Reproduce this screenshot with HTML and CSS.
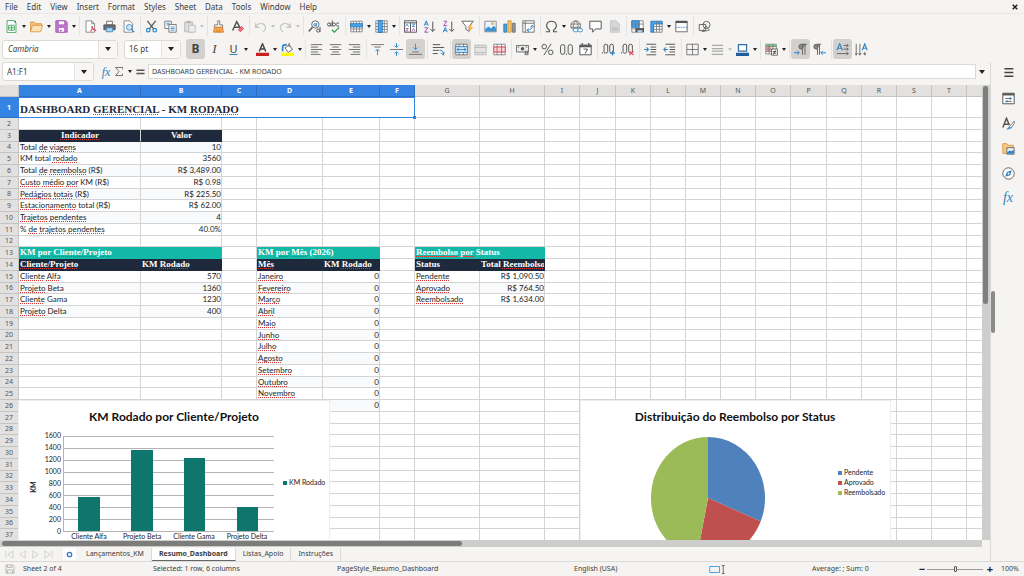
FILE: index.html
```html
<!DOCTYPE html>
<html lang="en">
<head>
<meta charset="utf-8">
<title>Resumo_Dashboard</title>
<link rel="stylesheet" href="styles.css">
</head>
<body>
<header>
<nav class="menubar" aria-label="Main menu">
  <button>File</button><button>Edit</button><button>View</button><button>Insert</button><button>Format</button><button>Styles</button><button>Sheet</button><button>Data</button><button>Tools</button><button>Window</button><button>Help</button>
  <button class="close" aria-label="Close document"><svg viewBox="0 0 8 8"><path d="M1 1l6 6M7 1l-6 6" stroke="#222" stroke-width="2"/></svg></button>
</nav>

<div class="toolbar" role="toolbar" aria-label="Standard">
  <button class="tb" aria-label="New"><svg viewBox="0 0 16 16"><path d="M2.500.5h8l3 3v12h-11z" fill="#fff" stroke="#2e9e4f"/><path d="M4.500 6.500h7v6h-7zM4.500 9.500h7M8 6.500v6" stroke="#2e9e4f"/><path d="M10 1h3.500v3" fill="#2e9e4f"/></svg></button><button class="dd" aria-label="New options"></button>
  <button class="tb" aria-label="Open"><svg viewBox="0 0 16 16"><path d="M.5 14V2.500h5l1.500 2h7V7" fill="#f5c580" stroke="#d9903a"/><path d="M.5 14.500L3 6.500h12.500l-2.500 8z" fill="#fbe3b8" stroke="#d9903a"/></svg></button><button class="dd" aria-label="Open options"></button>
  <button class="tb" aria-label="Save"><svg viewBox="0 0 16 16"><path d="M1 1h12l2 2v12H1z" fill="#c77dd4" stroke="#9b45ad"/><path d="M4 1h8v5H4zM4 9h8v6H4z" fill="#fff" stroke="#9b45ad"/><path d="M6 12h2v2H6z" fill="#9b45ad"/></svg></button><button class="dd" aria-label="Save options"></button>
  <i class="sep"></i>
  <button class="tb" aria-label="Export as PDF"><svg viewBox="0 0 16 16"><path d="M2.500 1h7l3.500 3.500V15h-10.500z" fill="#fff" stroke="#777"/><path d="M9.500 1v3.500H13" stroke="#777"/><path d="M8 14c2-2 3-5 2-6s0 4 5 5" stroke="#e04f5f" stroke-width="1.500"/></svg></button>
  <button class="tb" aria-label="Print"><svg viewBox="0 0 16 16"><path d="M4.500 1.500h7V6h-7z" fill="#fff" stroke="#555"/><path d="M1 6h14v6H1z" fill="#6b6b6b" stroke="#555"/><path d="M4 9.500h8v5H4z" fill="#a9d3f3" stroke="#3b80b8"/></svg></button>
  <button class="tb" aria-label="Print preview"><svg viewBox="0 0 16 16"><path d="M2.500 1h7l3.500 3.500V15h-10.500z" fill="#fff" stroke="#777"/><circle cx="9" cy="9" r="3.500" fill="#cfe8fa" stroke="#2f83c5"/><path d="M11.500 11.500L15 15" stroke="#2f83c5" stroke-width="1.500"/></svg></button>
  <i class="sep"></i>
  <button class="tb" aria-label="Cut"><svg viewBox="0 0 16 16"><path d="M3 1l7.500 10M13 1L5.500 11" stroke="#555" stroke-width="1.500"/><circle cx="4" cy="12.500" r="2.200" stroke="#2f83c5" stroke-width="1.500"/><circle cx="12" cy="12.500" r="2.200" stroke="#2f83c5" stroke-width="1.500"/></svg></button>
  <button class="tb" aria-label="Copy"><svg viewBox="0 0 16 16"><path d="M1 1.500h8v9H1z" fill="#fff" stroke="#666"/><path d="M3 4h4M3 6h3" stroke="#2f83c5"/><path d="M6 5.500h9V15H6z" fill="#fff" stroke="#666"/><path d="M8 8.500h5M8 10.500h5M8 12.500h5" stroke="#2f83c5"/></svg></button>
  <button class="tb" aria-label="Paste" disabled><svg viewBox="0 0 16 16"><path d="M2 2.500h10v12H2z" fill="#ddd" stroke="#b5b5b5"/><path d="M4.500 1h5v3h-5z" fill="#b5b5b5"/><path d="M7 6.500h8V15H7z" fill="#eee" stroke="#b5b5b5"/></svg></button><button class="dd off" aria-label="Paste options" disabled></button>
  <i class="sep"></i>
  <button class="tb" aria-label="Clone formatting"><svg viewBox="0 0 16 16"><path d="M7 1h2.500v5H13v3H3V6h4z" fill="#fff" stroke="#666"/><path d="M3 9h10l1 6H2z" fill="#f5a94f" stroke="#cf7a22"/><path d="M6 12v3M9 12v3" stroke="#cf7a22"/></svg></button>
  <button class="tb" aria-label="Clear formatting"><svg viewBox="0 0 16 16"><path d="M2 13L7 2l4.500 8M4 9h6" stroke="#555" stroke-width="1.800"/><path d="M9 12l4-4 2.500 2.500-4 4z" fill="#f0707c" stroke="#d8404f"/></svg></button>
  <i class="sep"></i>
  <button class="tb" aria-label="Undo" disabled><svg viewBox="0 0 16 16"><path d="M2 4v5h5M2 9c3-6 10-6 12-1 1 3-1 5-3 7" stroke="#c2c2c2" stroke-width="1.400"/></svg></button><button class="dd off" aria-label="Undo list" disabled></button>
  <button class="tb" aria-label="Redo" disabled><svg viewBox="0 0 16 16"><path d="M14 4v5H9M14 9C11 3 4 3 2 8c-1 3 1 5 3 7" stroke="#c2c2c2" stroke-width="1.400"/></svg></button><button class="dd off" aria-label="Redo list" disabled></button>
  <i class="sep"></i>
  <button class="tb" aria-label="Find and replace"><svg viewBox="0 0 16 16"><circle cx="9" cy="5.500" r="4.500" fill="#fff" stroke="#666" stroke-width="1.200"/><circle cx="8.500" cy="6" r="1.500" stroke="#2f83c5" stroke-width="1.200"/><path d="M10.500 3.500v4.500" stroke="#2f83c5"/><path d="M5.500 9L1 14" stroke="#666" stroke-width="2"/><circle cx="12.500" cy="13" r="1.900" stroke="#555" stroke-width="1.200"/><path d="M14.800 8.500V15" stroke="#555" stroke-width="1.200"/></svg></button>
  <button class="tb" aria-label="Spelling"><svg viewBox="0 0 16 16"><g stroke="#555" stroke-width="1.200"><circle cx="2.500" cy="5.500" r="1.900"/><path d="M4.700 3.500V8M6.500.5V8M14.800 4.200a2 2 0 1 0 0 2.800"/><circle cx="8.500" cy="5.500" r="1.900"/></g><path d="M6 12l3 3 6-6" stroke="#2e9e4f" stroke-width="1.500"/></svg></button>
  <i class="sep"></i>
  <button class="tb" aria-label="Row"><svg viewBox="0 0 16 16"><path d="M1 1.500h14v13H1z" fill="#fff" stroke="#777"/><path d="M1 11h14M4.500 1.500v13M8 1.500v13M11.500 1.500v13" stroke="#777"/><path d="M.5 4.500h15v4H.5z" fill="#4aa3e8" stroke="#2274b5"/></svg></button><button class="dd" aria-label="Row options"></button>
  <button class="tb" aria-label="Column"><svg viewBox="0 0 16 16"><path d="M1 1h14v14H1z" fill="#fff" stroke="#777"/><path d="M1 4.500h14M1 8h14M1 11.500h14M11.500 1v14" stroke="#777"/><path d="M4 .5h5v15H4z" fill="#4aa3e8" stroke="#2274b5"/></svg></button><button class="dd" aria-label="Column options"></button>
  <i class="sep"></i>
  <button class="tb" aria-label="Sort"><svg viewBox="0 0 16 16"><path d="M.5 1h15v14H.5zM.5 3.500h15M8 3.500V15" fill="#fff" stroke="#555" stroke-width="1.200"/><path d="M2 8l1.500-3L5.500 8M10 5h3.500L10 8h3.500" stroke="#2f83c5"/><path d="M2 10.500h3.500L2 13.500h3.500M10 13.500l1.500-3 2 3" stroke="#a24fb5"/></svg></button>
  <button class="tb" aria-label="Sort ascending"><svg viewBox="0 0 16 16"><path d="M1.500 7l2.500-6 2.500 6M2.500 5h3" stroke="#2f83c5" stroke-width="1.200"/><path d="M2 9.500h4L2 15h4.500" stroke="#a24fb5" stroke-width="1.200"/><path d="M12 2v12M9 11l3 3 3-3" stroke="#555" stroke-width="1.200"/></svg></button>
  <button class="tb" aria-label="Sort descending"><svg viewBox="0 0 16 16"><path d="M2 1.500h4L2 7h4.500" stroke="#a24fb5" stroke-width="1.200"/><path d="M1.500 15L4 9l2.500 6M2.500 13h3" stroke="#2f83c5" stroke-width="1.200"/><path d="M12 2v12M9 11l3 3 3-3" stroke="#555" stroke-width="1.200"/></svg></button>
  <button class="tb" aria-label="AutoFilter"><svg viewBox="0 0 16 16"><path d="M1 1.500h14L10 8v6l-4-2.500V8z" fill="#fff" stroke="#666" stroke-width="1.200"/><path d="M12 5l-4 6h3l-2 5 6-7h-3l2-4z" fill="#f2b14c"/></svg></button>
  <i class="sep"></i>
  <button class="tb" aria-label="Insert image"><svg viewBox="0 0 16 16"><path d="M1 1.500h14v13H1z" fill="#e9f4fd" stroke="#777"/><path d="M1.500 14V11l4-3 3 2.500L12 7l3 3v4z" fill="#3f92d2"/><circle cx="10.500" cy="4.500" r="1.800" fill="#f2b14c"/></svg></button>
  <button class="tb" aria-label="Insert chart"><svg viewBox="0 0 16 16"><path d="M1 5h3.500v10H1z" fill="#4aa3e8" stroke="#2274b5"/><path d="M6 1h4v14H6z" fill="#f7c66e" stroke="#cf8a22"/><path d="M11.500 4H15v11h-3.500z" fill="#999" stroke="#666"/></svg></button>
  <button class="tb" aria-label="Insert pivot table"><svg viewBox="0 0 16 16"><path d="M1 1h14v14H1zM1 4h14M4 1v14" fill="#fff" stroke="#777" stroke-width="1.200"/><path d="M6.500 12.500c4 0 6-2 6-5M10.500 9l2-2.500 2 2M8.500 10.500l-2.500 2 2.500 2" stroke="#2f83c5" stroke-width="1.200"/></svg></button>
  <i class="sep"></i>
  <button class="tb" aria-label="Special character"><svg viewBox="0 0 16 16"><path d="M1 14.500h4.500v-2C-.5 8 2 1.500 8 1.500S16.500 8 10.500 12.500v2H15" stroke="#555" stroke-width="1.400"/></svg></button><button class="dd" aria-label="Special characters list"></button>
  <button class="tb" aria-label="Insert hyperlink"><svg viewBox="0 0 16 16"><circle cx="7" cy="7" r="6" stroke="#666"/><path d="M1 5h12M1 9h12M7 1c-4 4-4 8 0 12M7 1c4 4 4 8 0 12" stroke="#666"/><rect x="4" y="10.500" width="6" height="4" rx="2" fill="#fff" stroke="#2f83c5"/><rect x="9.500" y="10.500" width="6" height="4" rx="2" fill="#fff" stroke="#2f83c5"/></svg></button>
  <button class="tb" aria-label="Insert comment"><svg viewBox="0 0 16 16"><path d="M1 1.500h14v9.500H8l-3.500 4V11H1z" fill="#fff" stroke="#555" stroke-width="1.200"/></svg></button>
  <button class="tb" aria-label="Headers and footers" disabled><svg viewBox="0 0 16 16"><path d="M3 1h7l4 4v10H3z" fill="#d6d6d6" stroke="#c2c2c2"/><path d="M5 10h7M5 12h7" stroke="#b5b5b5"/></svg></button>
  <i class="sep"></i>
  <button class="tb" aria-label="Define print area"><svg viewBox="0 0 16 16"><path d="M1 1h14v14H1z" fill="#fff" stroke="#777"/><path d="M1 1h9v8H1z" fill="#4aa3e8" stroke="#2274b5"/><path d="M1 5h14M5.500 1v14M10 1v14M1 11h14" stroke="#777"/><path d="M6 10h10v5H6z" fill="#555"/><path d="M8 12.500h6v3H8z" fill="#a9d3f3"/></svg></button>
  <button class="tb" aria-label="Freeze rows and columns"><svg viewBox="0 0 16 16"><path d="M4 4h11v11H4z" fill="#fff" stroke="#777"/><path d="M1 4V1.500h14V5H4.500v10H1z" fill="#4aa3e8" stroke="#2274b5"/><path d="M4 8h11M4 11.500h11M8 2v13M11.500 2v13" stroke="#777"/></svg></button><button class="dd" aria-label="Freeze options"></button>
  <button class="tb" aria-label="Split window"><svg viewBox="0 0 16 16"><path d="M1 1.500h14v13H1z" fill="#fff" stroke="#555"/><path d="M1 2.500h14" stroke="#555" stroke-width="2.500"/><path d="M1 9h14" stroke="#2f83c5" stroke-dasharray="2 1"/></svg></button>
  <i class="sep"></i>
  <button class="tb" aria-label="Show draw functions"><svg viewBox="0 0 16 16"><path d="M1.500 5.500h8V13h-8z" stroke="#666" stroke-width="1.200"/><circle cx="10.500" cy="6" r="4.300" stroke="#666" stroke-width="1.200"/><path d="M5 14.500l5-7 4 5z" stroke="#666"/></svg></button>
</div>

<div class="toolbar formatting" role="toolbar" aria-label="Formatting">
  <div class="combo font-name"><input type="text" value="Cambria" aria-label="Font name"><button aria-label="Font list"></button></div>
  <div class="combo font-size"><input type="text" value="16 pt" aria-label="Font size"><button aria-label="Size list"></button></div>
  <button class="tb on" aria-label="Bold"><b class="glyph">B</b></button>
  <button class="tb" aria-label="Italic"><em class="glyph serif">I</em></button>
  <button class="tb" aria-label="Underline"><u class="glyph under">U</u></button><button class="dd" aria-label="Underline options"></button>
  <i class="sep blank"></i>
  <button class="tb" aria-label="Font color"><svg viewBox="0 0 16 16"><path d="M4 10.500L8 1l4 9.500M5.500 7.500h5" stroke="#444" stroke-width="1.800"/><path d="M0 12h16v4H0z" fill="#c9211e"/></svg></button><button class="dd" aria-label="Font color list"></button>
  <button class="tb" aria-label="Highlighting"><svg viewBox="0 0 16 16"><path d="M2 10V5c0-2 2-3 5-3" stroke="#2f83c5" stroke-width="2"/><path d="M5 6l5-4 4 6-5 3.500z" fill="#fff" stroke="#666" stroke-width="1.200"/><path d="M10 0v5" stroke="#555"/><path d="M0 12h16v4H0z" fill="#ffff00"/></svg></button><button class="dd" aria-label="Highlight color list"></button>
  <i class="sep"></i>
  <button class="tb" aria-label="Align left"><svg viewBox="0 0 16 16"><path d="M1 2h14M1 5h9M1 8h14M1 11h9M1 14h12" stroke="#555"/></svg></button>
  <button class="tb" aria-label="Center"><svg viewBox="0 0 16 16"><path d="M1 2h14M4 5h8M1 8h14M4 11h8M2 14h12" stroke="#555"/></svg></button>
  <button class="tb" aria-label="Align right"><svg viewBox="0 0 16 16"><path d="M1 2h14M6 5h9M1 8h14M6 11h9M3 14h12" stroke="#555"/></svg></button>
  <i class="sep"></i>
  <button class="tb" aria-label="Align top"><svg viewBox="0 0 16 16"><path d="M0 2h16M4 5h8" stroke="#777" stroke-width="1.200"/><path d="M8 15V7.500M5.500 10L8 7.500l2.500 2.500" stroke="#3a94d8" stroke-width="1.200"/></svg></button>
  <button class="tb" aria-label="Center vertically"><svg viewBox="0 0 16 16"><path d="M0 8h16" stroke="#777" stroke-width="1.200"/><path d="M8 0v5M5.500 3L8 5.500 10.500 3M8 16v-5M5.500 13L8 10.500l2.500 2.500" stroke="#3a94d8" stroke-width="1.200"/></svg></button>
  <button class="tb on" aria-label="Align bottom"><svg viewBox="0 0 16 16"><path d="M0 14h16M4 11h8" stroke="#777" stroke-width="1.200"/><path d="M8 1v7M5.500 5.500L8 8l2.500-2.500" stroke="#3a94d8" stroke-width="1.200"/></svg></button>
  <i class="sep"></i>
  <button class="tb" aria-label="Wrap text"><svg viewBox="0 0 16 16"><path d="M1 2h9M1 5.500h14M1 9h8M1 13h6" stroke="#555" stroke-width="1.200"/><path d="M10 9c3 0 4 2 4 5M11 12l3 3 1-4" stroke="#2f83c5" stroke-width="1.200"/></svg></button>
  <i class="sep"></i>
  <button class="tb on" aria-label="Merge and center"><svg viewBox="0 0 16 16"><path d="M1 1.500h14v13H1zM1 4.500h14M1 11.500h14M5 1.500v3M10.500 1.500v3M5 11.500v3M10.500 11.500v3" fill="#fff" stroke="#666"/><path d="M.5 4.500h15v7H.5z" fill="#cfe8fa" stroke="#2f83c5"/><path d="M2.500 8h11M4.500 6l-2 2 2 2M11.500 6l2 2-2 2" stroke="#2274b5"/></svg></button>
  <button class="tb" aria-label="Merge cells" disabled><svg viewBox="0 0 16 16"><path d="M1 2.500h14v12H1zM1 5.500h14M1 11.500h14M5 2.500v3M10.500 2.500v3M5 11.500v3M10.500 11.500v3" fill="#e4e4e4" stroke="#b8b8b8"/></svg></button>
  <button class="tb" aria-label="Unmerge cells"><svg viewBox="0 0 16 16"><path d="M1 1.500h14v13H1zM1 5h14M1 11h14M5 1.500v13M10.500 1.500v13" fill="#fff" stroke="#777"/><path d="M1 5h14v6H1zM5 5v6M10.500 5v6" fill="#fbd5d8" stroke="#d8404f"/></svg></button>
  <i class="sep"></i>
  <button class="tb" aria-label="Currency format"><svg viewBox="0 0 16 16"><path d="M.5 3h15v8H.5z" fill="#eee" stroke="#555"/><circle cx="8" cy="7" r="2.200" fill="#555"/><path d="M2 5h2M12 5h2" stroke="#555"/><ellipse cx="13" cy="11" rx="2.500" ry="1" fill="#fff" stroke="#555"/><ellipse cx="13" cy="13.500" rx="2.500" ry="1" fill="#fff" stroke="#555"/></svg></button><button class="dd" aria-label="Currency list"></button>
  <button class="tb" aria-label="Percent format"><svg viewBox="0 0 16 16"><circle cx="4" cy="4.500" r="2.800" stroke="#555" stroke-width="1.200"/><circle cx="12" cy="11.500" r="2.800" stroke="#555" stroke-width="1.200"/><path d="M12.500 1l-9 14" stroke="#555" stroke-width="1.200"/></svg></button>
  <button class="tb" aria-label="Number format"><svg viewBox="0 0 16 16"><rect x=".7" y="2" width="5.200" height="12" rx="2.600" stroke="#555" stroke-width="1.200"/><rect x="10" y="2" width="5.200" height="12" rx="2.600" stroke="#555" stroke-width="1.200"/><path d="M7.300 13h1.400v1.500H7.300z" fill="#555"/></svg></button>
  <button class="tb" aria-label="Date format"><svg viewBox="0 0 16 16"><path d="M1 2.500h14v12H1z" fill="#fff" stroke="#555" stroke-width="1.200"/><path d="M1 4h14" stroke="#555" stroke-width="2.500"/><path d="M4 0v3M12 0v3" stroke="#555" stroke-width="1.500"/><path d="M5.500 7.500h5L7.500 13" stroke="#555" stroke-width="1.200"/></svg></button>
  <i class="sep"></i>
  <button class="tb" aria-label="Add decimal place"><svg viewBox="0 0 16 16"><rect x="2.500" y="1.500" width="4.500" height="11" rx="2.200" stroke="#555" stroke-width="1.200"/><rect x="9.500" y="1.500" width="4.500" height="11" rx="2.200" stroke="#555" stroke-width="1.200"/><path d="M0 11.500h1.400V13H0z" fill="#555"/><path d="M13 9.500v6M10 12.500h6" stroke="#2f83c5" stroke-width="1.500"/></svg></button>
  <button class="tb" aria-label="Delete decimal place"><svg viewBox="0 0 16 16"><rect x="2.500" y="1.500" width="4.500" height="11" rx="2.200" stroke="#555" stroke-width="1.200"/><rect x="9.500" y="1.500" width="4.500" height="11" rx="2.200" stroke="#555" stroke-width="1.200"/><path d="M0 11.500h1.400V13H0z" fill="#555"/><path d="M10.500 10l5 5M15.500 10l-5 5" stroke="#e04f5f" stroke-width="1.500"/></svg></button>
  <i class="sep"></i>
  <button class="tb" aria-label="Increase indent"><svg viewBox="0 0 16 16"><path d="M3 1.500h12M8 5h7M8 8h7M8 11h7M3 14.500h12" stroke="#555" stroke-width="1.200"/><path d="M0 8h5M3 5.500L5.500 8 3 10.500" stroke="#2f83c5" stroke-width="1.300"/></svg></button>
  <button class="tb" aria-label="Decrease indent"><svg viewBox="0 0 16 16"><path d="M3 1.500h12M8 5h7M8 8h7M8 11h7M3 14.500h12" stroke="#555" stroke-width="1.200"/><path d="M1 8h5M3.500 5.500L1 8l2.500 2.500" stroke="#2f83c5" stroke-width="1.300"/></svg></button>
  <i class="sep"></i>
  <button class="tb" aria-label="Borders"><svg viewBox="0 0 16 16"><path d="M1 1.500h14v13H1zM1 8h14M8 1.500v13" stroke="#666"/></svg></button><button class="dd" aria-label="Border list"></button>
  <button class="tb" aria-label="Border style" disabled><svg viewBox="0 0 16 16"><path d="M1 3h14M1 7h14M1 10h14M1 14h14" stroke="#aaa" stroke-width="1.400"/></svg></button><button class="dd off" aria-label="Border style list" disabled></button>
  <button class="tb" aria-label="Border color"><svg viewBox="0 0 16 16"><path d="M3 2h10v8H3z" fill="#fff" stroke="#2f6fa5" stroke-width="1.500"/><path d="M0 12h16v4H0z" fill="#1f5c99"/></svg></button><button class="dd" aria-label="Border color list"></button>
  <i class="sep"></i>
  <button class="tb" aria-label="Conditional formatting"><svg viewBox="0 0 16 16"><path d="M1 1.500h13v12H1z" fill="#fff" stroke="#777"/><path d="M1 1.500h13v3H1z" fill="#73c686"/><path d="M1 4.500h6v6H1z" fill="#f29a9a"/><path d="M1 4.500h13M1 7.500h13M1 10.500h13M5 1.500v12M9.500 1.500v12" stroke="#777"/><path d="M8 7.500h7.500V15H8z" fill="#fff" stroke="#555"/><path d="M9.500 10.500H14M9.500 12.500H14M13 9l-2.500 5" stroke="#444"/></svg></button><button class="dd" aria-label="Conditional list"></button>
  <i class="sep"></i>
  <button class="tb on" aria-label="Left-to-right"><svg viewBox="0 0 16 16"><path d="M15 1.500H9a3 3 0 0 0 0 6h1.500z" fill="#888"/><path d="M16 1.500H9a3 3 0 0 0 0 6h1.500M10.500 1.500v13M13.500 1.500v13" stroke="#666" stroke-width="1.200"/><path d="M0 12h6M4 9.500L6.500 12 4 14.500" stroke="#2f83c5" stroke-width="1.200"/></svg></button>
  <button class="tb" aria-label="Right-to-left"><svg viewBox="0 0 16 16"><path d="M9 1.500H4a3 3 0 0 0 0 6h1.500z" fill="#888"/><path d="M10 1.500H4a3 3 0 0 0 0 6h1.500M5.500 1.500v13M8 1.500v13" stroke="#666" stroke-width="1.200"/><path d="M10 12h6M12 9.500L9.500 12l2.500 2.500" stroke="#2f83c5" stroke-width="1.200"/></svg></button>
  <i class="sep"></i>
  <button class="tb on" aria-label="Text direction from left to right"><svg viewBox="0 0 16 16"><path d="M1 9l3.500-8L8 9M2 6.500h5" stroke="#2f83c5" stroke-width="1.400"/><path d="M9 3h6M9 7.500h6M1 13h14M13 1l2 2-2 2M13 5.500l2 2-2 2M13 11l2 2-2 2" stroke="#555"/></svg></button>
  <button class="tb" aria-label="Text direction from top to bottom"><svg viewBox="0 0 16 16"><path d="M9 9l3-8 3 8M10 6.500h4" stroke="#2f83c5" stroke-width="1.400"/><path d="M1.500 1v13M6 1v13M12 11v3M0 12.500L1.500 15 3 12.500M4.500 12.500L6 15l1.500-2.500M10.500 12.500L12 15l1.500-2.500" stroke="#555"/></svg></button>
</div>
</header>

<div class="workspace">
<main class="document">
  <div class="formula-bar">
    <div class="combo name-box"><input type="text" value="A1:F1" aria-label="Name box"><button aria-label="Named ranges"></button></div>
    <button class="tb fx" aria-label="Function wizard">fx</button>
    <button class="sigma" aria-label="Select function"><svg viewBox="0 0 16 16"><path d="M13.500 4.500v-3h-11L8 8l-5.500 6.500h11v-3" stroke="#555" stroke-width="1.300"/></svg></button><button class="dd" aria-label="Function list"></button>
    <button class="equals" aria-label="Formula"><svg viewBox="0 0 16 16"><path d="M3 6.500h10M3 10.500h10" stroke="#555" stroke-width="1.800"/></svg></button>
    <input class="formula" type="text" value="DASHBOARD GERENCIAL - KM RODADO" aria-label="Input line">
    <button class="expand" aria-label="Expand formula bar"></button>
  </div>

  <div class="grid-row">
    <div class="sheet">
      <table id="grid"></table>
      <div class="selection"></div>
      <svg class="chart bar-chart" width="312" height="160" role="img" aria-label="KM Rodado por Cliente/Projeto">
        <rect width="312" height="160" fill="#fff" stroke="#ddd"/>
        <text class="chart-title" x="156" y="21">KM Rodado por Cliente/Projeto</text>
        <path d="M45 36.500h211M45 48.500h211M45 60.500h211M45 72.500h211M45 84.500h211M45 95.500h211M45 107.500h211M45 119.500h211M45 131.500h211M45.500 36v96" stroke="#b3b3b3"/>
        <g fill="#0f766e"><rect x="60" y="97" width="22" height="34"/><rect x="113" y="50" width="22" height="81"/><rect x="166" y="58" width="21" height="73"/><rect x="219" y="107" width="21" height="24"/></g>
        <g class="axis end"><text x="43" y="38">1600</text><text x="43" y="50">1400</text><text x="43" y="62">1200</text><text x="43" y="74">1000</text><text x="43" y="86">800</text><text x="43" y="98">600</text><text x="43" y="110">400</text><text x="43" y="122">200</text><text x="43" y="134">0</text></g>
        <g class="axis mid"><text x="71" y="139">Cliente Alfa</text><text x="124" y="139">Projeto Beta</text><text x="176" y="139">Cliente Gama</text><text x="229" y="139">Projeto Delta</text></g>
        <text class="axis-title" transform="translate(18 87) rotate(-90)">KM</text>
        <rect x="265" y="81" width="4" height="4" fill="#0f766e"/><text class="axis" x="271" y="85">KM Rodado</text>
      </svg>
      <svg class="chart pie-chart" width="311" height="160" role="img" aria-label="Distribuição do Reembolso por Status">
        <rect width="311" height="160" fill="#fff" stroke="#ddd"/>
        <text class="chart-title" x="155" y="21">Distribuição do Reembolso por Status</text>
        <path d="M128 98V37A57 61 0 0 1 180.700 121.300Z" fill="#4f81bd"/>
        <path d="M128 98L180.700 121.300A57 61 0 0 1 116.700 157.800Z" fill="#c0504d"/>
        <path d="M128 98L116.700 157.800A57 61 0 0 1 128 37Z" fill="#9bbb59"/>
        <rect x="258" y="71" width="4" height="4" fill="#4f81bd"/><text class="axis" x="264" y="75">Pendente</text>
        <rect x="258" y="81" width="4" height="4" fill="#c0504d"/><text class="axis" x="264" y="85">Aprovado</text>
        <rect x="258" y="91" width="4" height="4" fill="#9bbb59"/><text class="axis" x="264" y="95">Reembolsado</text>
      </svg>
    </div>
    <div class="vscroll"><div class="thumb"></div></div>
  </div>
  <div class="hscroll"><div class="thumb"></div></div>

  <div class="tabs">
    <div class="tab-nav"><button aria-label="First sheet" disabled><svg viewBox="0 0 10 10"><path d="M1 1v8M9 1L3 5l6 4z" stroke="#cfcfcf"/></svg></button><button aria-label="Previous sheet" disabled><svg viewBox="0 0 10 10"><path d="M8 1L2 5l6 4z" stroke="#cfcfcf"/></svg></button><button aria-label="Next sheet" disabled><svg viewBox="0 0 10 10"><path d="M2 1l6 4-6 4z" stroke="#cfcfcf"/></svg></button><button aria-label="Last sheet" disabled><svg viewBox="0 0 10 10"><path d="M9 1v8M1 1l6 4-6 4z" stroke="#cfcfcf"/></svg></button></div>
    <button class="add" aria-label="Add sheet"><svg viewBox="0 0 8 8"><circle cx="4" cy="4" r="2.500" fill="#fff" stroke="#3a76c4" stroke-width="1.500"/></svg></button>
    <div class="tab-list" role="tablist"><button role="tab">Lançamentos_KM</button><button role="tab" aria-selected="true">Resumo_Dashboard</button><button role="tab">Listas_Apoio</button><button role="tab">Instruções</button></div>
  </div>
</main>

<aside class="sidebar" aria-label="Sidebar">
  <div class="grip"><span></span></div>
  <div class="deck">
  <button aria-label="Sidebar settings"><svg viewBox="0 0 16 16"><path d="M3 3.500h11M3 8h11M3 12.500h11" stroke="#444" stroke-width="1.800"/></svg></button>
  <button aria-label="Properties"><svg viewBox="0 0 16 16"><path d="M1 1.500h14v13H1z" fill="#fff" stroke="#555" stroke-width="1.200"/><path d="M1 3h14" stroke="#555" stroke-width="2.500"/><path d="M4 8h8M4 11.500h8" stroke="#555"/><path d="M10 6.500v3M6 10v3" stroke="#2f83c5" stroke-width="1.500"/></svg></button>
  <button aria-label="Styles"><svg viewBox="0 0 16 16"><path d="M1 13L5.500 1.500 9 10M3 9h5" stroke="#555" stroke-width="1.800"/><path d="M9 12l6-7v3l-4 6z" fill="#fff" stroke="#666"/><path d="M5 15c2 0 2-3 4-3l2 1c-1 2-3 3-6 2z" fill="#3f92d2"/></svg></button>
  <button aria-label="Gallery"><svg viewBox="0 0 16 16"><path d="M1 14V2h5l1 2h7v10z" fill="#f7c983" stroke="#d9903a"/><path d="M6 7h9v8H6z" fill="#e9f4fd" stroke="#555"/><path d="M6.500 14.500v-2l3-2 2 1 3-2v5z" fill="#2f83c5"/></svg></button>
  <button aria-label="Navigator"><svg viewBox="0 0 16 16"><circle cx="8" cy="8" r="7" fill="#fff" stroke="#666" stroke-width="1.200"/><path d="M12 4l-2 6-6 2 2-6z" fill="#2f83c5"/><circle cx="8" cy="8" r="1.200" fill="#fff"/></svg></button>
  <button class="fx" aria-label="Functions">fx</button>
  </div>
</aside>
</div>

<footer class="status">
  <svg viewBox="0 0 16 16"><path d="M1.500 1.500h11l2 2v11h-13zM4 1.500v4h7v-4M4 14.500v-5h8v5" stroke="#999"/></svg>
  <span>Sheet 2 of 4</span><span>Selected: 1 row, 6 columns</span><span>PageStyle_Resumo_Dashboard</span><span>English (USA)</span>
  <svg class="wide" viewBox="0 0 24 12"><path d="M1 2h13v8H1z" stroke="#3a9ad9" stroke-width="1.200"/><path d="M19 0v12M17 .5h4M17 11.500h4" stroke="#444"/></svg>
  <span>Average: ; Sum: 0</span>
  <button aria-label="Zoom out">−</button><input type="range" min="0" max="100" value="50" aria-label="Zoom"><button aria-label="Zoom in">+</button><span class="zoom">100%</span>
</footer>
<script src="app.js"></script>
</body>
</html>
```
FILE: styles.css
```css
* { box-sizing: border-box; }

body {
  margin: 0;
  height: 100vh;
  display: flex;
  flex-direction: column;
  overflow: hidden;
  background: #f5f4f2;
  color: #3c3c3c;
  font: 7px/12px "Noto Sans", sans-serif;
}

button, input {
  margin: 0;
  padding: 0;
  border: 0;
  background: none;
  color: inherit;
  font: inherit;
  outline: 0;
}

svg { fill: none; }

/* Menu bar */
.menubar {
  display: flex;
  align-items: center;
  gap: 9px;
  height: 14px;
  padding: 0 6px 0 5px;
  border-bottom: 1px solid #e9e8e6;
  font-size: 8px;
}
.close { margin-left: auto; display: flex; }
.close svg { width: 6px; height: 6px; }

/* Toolbars */
.toolbar {
  display: flex;
  align-items: center;
  height: 24px;
  padding-left: 2px;
}
.formatting { padding-bottom: 2px; }
.tb {
  flex: none;
  display: flex;
  align-items: center;
  justify-content: center;
  width: 19px;
  height: 20px;
  border-radius: 3px;
}
.tb svg { width: 13px; height: 13px; }
.tb.on { background: #d3d1ce; }
.dd {
  flex: none;
  display: flex;
  align-items: center;
  justify-content: center;
  width: 6px;
  height: 20px;
}
.dd::before, .combo button::before, .expand::before {
  content: "";
  border: 2px solid transparent;
  border-top: 3px solid #222;
  border-bottom: 0;
}
.dd.off::before { border-top-color: #c2c2c2; }
.combo button::before, .expand::before {
  border-width: 4px 3px 0;
}
.sep {
  flex: none;
  width: 4px;
  height: 20px;
  background: linear-gradient(#e4e3e1, #e4e3e1) center / 1px 100% no-repeat;
}
.sep.blank { background: none; }
.glyph { font-size: 12px; line-height: 14px; color: #444; }
.glyph.serif { font-family: "Liberation Serif", serif; font-size: 13px; }
.glyph.under { font-size: 11px; text-decoration-color: #2f83c5; }

.combo {
  flex: none;
  display: flex;
  height: 19px;
  background: #fff;
  border: 1px solid #dcdad7;
  border-radius: 3px;
}
.combo input { flex: 1; min-width: 0; padding-left: 4px; font-size: 8px; }
.combo button {
  display: flex;
  align-items: center;
  justify-content: center;
  width: 19px;
  background: #f8f7f6;
  border-left: 1px solid #e4e2df;
}
.font-name { width: 116px; margin-right: 6px; }
.font-name input { padding-left: 5px; font-style: italic; }
.font-size { width: 57px; margin-right: 5px; }

/* Formula bar */
.workspace { flex: 1; display: flex; min-height: 0; }
.document { flex: 1; min-width: 0; display: flex; flex-direction: column; }
.formula-bar {
  display: flex;
  align-items: center;
  height: 23px;
  padding: 0 2px 4px 2px;
}
.name-box { width: 92px; margin-right: 4px; }
.fx {
  color: #2f83c5;
  font: italic 12px/16px "Liberation Serif", serif;
}
.tb.fx { width: 16px; }
.sigma { display: flex; width: 10px; margin-right: 3px; }
.sigma svg { width: 10px; height: 11px; }
.equals { display: flex; justify-content: center; width: 15px; }
.equals svg { width: 13px; height: 13px; }
.formula {
  flex: 1;
  min-width: 0;
  height: 15px;
  padding-left: 3px;
  background: #fff;
  border: 1px solid #dcdad7;
}
.expand { display: flex; justify-content: center; width: 12px; }

/* Sheet */
.grid-row { flex: 1; display: flex; min-height: 0; }
.sheet {
  position: relative;
  flex: 1;
  min-width: 0;
  overflow: hidden;
  background: #fff;
}
#grid {
  width: 100%;
  table-layout: fixed;
  border-collapse: separate;
  border-spacing: 0;
  color: #1c1c1c;
  font: 8px/11px Lato, sans-serif;
}
#grid th, #grid td {
  height: 12px;
  padding: 0 0 0 1px;
  border: 0 solid #d4d4d4;
  border-width: 0 1px 1px 0;
  overflow: hidden;
  white-space: nowrap;
  text-align: left;
}
#grid tr:nth-child(4n) th, #grid tr:nth-child(4n) td { height: 11px; line-height: 10px; }
#grid th {
  padding: 0;
  background: #e2e1e0;
  border-color: #c4c4c4;
  color: #555;
  font: 7px/11px "Noto Sans", sans-serif;
  text-align: center;
}
#grid th.sel {
  background: #3584e4;
  border-color: #2a6fc4;
  color: #fff;
  font-weight: 700;
}
#grid .first th, #grid .first td { height: 21px; }
#grid td.title {
  padding-top: 5px;
  color: #1e293b;
  font: 700 11px/15px "Liberation Serif", serif;
}
#grid td.num { text-align: right; }
#grid td.band { background: #f8fafc; }
#grid td.dark, #grid td.teal {
  border-color: #1e293b;
  background: #1e293b;
  color: #fff;
  font-family: "Liberation Serif", serif;
  font-size: 9px;
  font-weight: 700;
}
#grid td.teal { background: #14b8a6; border-color: #14b8a6; }
#grid td.dark.edge { border-right-color: #d4d4d4; }
#grid td.center { text-align: center; }
.misspelt {
  text-decoration: underline dotted #e03131 1px;
  text-decoration-skip-ink: none;
  text-underline-offset: 1px;
}
.c-head { width: 19px; }
.c-a { width: 122px; }
.c-b { width: 81px; }
.c-m { width: 35px; }
.c-w { width: 36px; }
.c-d { width: 66px; }
.c-e { width: 57px; }
.c-g { width: 65px; }

.selection {
  position: absolute;
  left: 18px;
  top: 12px;
  width: 397px;
  height: 21px;
  border: 1px solid #3584e4;
}
.selection::after {
  content: "";
  position: absolute;
  right: -2px;
  bottom: -2px;
  width: 3px;
  height: 3px;
  background: #3584e4;
}

/* Charts float over the cells */
.chart {
  position: absolute;
  top: 315px;
  color: #111;
  font: 7px Lato, sans-serif;
}
.chart text { fill: #222; }
.bar-chart { left: 18px; }
.pie-chart { left: 580px; }
.chart .chart-title { fill: #111; font-size: 12px; font-weight: 700; text-anchor: middle; }
.chart .axis-title { font-weight: 700; text-anchor: middle; }
.end { text-anchor: end; }
.mid { text-anchor: middle; }

/* Scroll bars */
.vscroll { width: 8px; padding: 1px 2px 0 1px; background: #cdcdcc; }
.vscroll .thumb { height: 48%; background: #7c7f7e; border-radius: 3px; }
.hscroll { height: 7px; margin-right: 8px; padding: 1px 2px; background: #cdcdcc; }
.hscroll .thumb { width: 47%; height: 5px; background: #7c7c7a; border-radius: 3px; }

/* Sheet tabs */
.tabs { display: flex; align-items: center; height: 14px; }
.tab-nav { display: flex; gap: 4px; width: 63px; padding-left: 5px; }
.tab-nav button { display: flex; }
.tab-nav svg { width: 9px; height: 9px; }
.add { display: flex; align-items: center; justify-content: center; width: 13px; height: 12px; background: #fff; margin-right: 3px; }
.add svg { width: 7px; height: 7px; }
.tab-list { display: flex; }
.tab-list button { height: 13px; padding: 0 7px; border-right: 1px solid #dcdad7; }
.tab-list [aria-selected] { font-weight: 700; background: #fff; border-bottom: 1px solid #666; }

/* Sidebar */
.sidebar { display: flex; width: 34px; border-left: 1px solid #dcdad7; }
.grip { width: 4px; display: flex; align-items: center; }
.grip span { width: 4px; height: 42px; background: #8a8a88; border-radius: 2px; }
.deck { display: flex; flex-direction: column; align-items: center; gap: 9px; flex: 1; padding: 2px 3px 0 0; }
.deck button { display: flex; justify-content: center; align-items: center; height: 16px; width: 16px; }
.deck button:first-child { margin-bottom: 1px; }
.deck svg { width: 13px; height: 13px; }
.deck .fx { font-size: 14px; }

/* Status bar */
.status {
  display: grid;
  grid-template-columns: 18px 130px 184px 237px 135px 103px 105px 10px 58px 10px 1fr;
  align-items: center;
  height: 15px;
  padding-left: 5px;
  border-top: 1px solid #dcdad7;
}
.status svg { width: 10px; height: 10px; }
.status .wide { width: 18px; height: 9px; }
.status button { color: #222; font-size: 11px; font-weight: 700; }
.status input { appearance: none; width: 56px; height: 10px; background: linear-gradient(#999, #999) center / 100% 1px no-repeat; }
.status input::-webkit-slider-thumb { appearance: none; width: 3px; height: 6px; background: #f5f4f2; border: 1px solid #555; border-radius: 1px; }
.zoom { padding-left: 6px; }
```
FILE: app.js
```js
const columnClasses = ["head", "a", "b", "m", "d", "e", "m", "g", "g", "m", "w", "m", "m", "m", "m", "m", "w", "m", "m", "m", "m", "m"];
const letters = "ABCDEFGHIJKLMNOPQRSTU";

// Words wrapped in underscores are unknown to the spell checker.
const cells = {
  A1: ["DASHBOARD _GERENCIAL_ - KM _RODADO_", "title", 6],
  A3: ["_Indicador_", "dark center edge"], B3: ["Valor", "dark center"],
  A13: ["KM _por_ _Cliente/Projeto_", "teal", 2],
  D13: ["KM _por_ _Mês_ (2026)", "teal", 2],
  G13: ["_Reembolso_ _por_ Status", "teal", 2],
  A14: ["_Cliente/Projeto_", "dark"], B14: ["KM _Rodado_", "dark"],
  D14: ["_Mês_", "dark"], E14: ["KM _Rodado_", "dark"],
  G14: ["Status", "dark"], H14: ["Total _Reembolso_", "dark"]
};

function fill(startRow, labelCol, valueCol, rows) {
  rows.forEach(([label, value], i) => {
    const row = startRow + i;
    const band = row % 2 === 0 ? " band" : "";
    cells[labelCol + row] = [label, band];
    cells[valueCol + row] = [value, "num" + band];
  });
}

fill(4, "A", "B", [
  ["Total _de_ _viagens_", "10"],
  ["KM total _rodado_", "3560"],
  ["Total _de_ _reembolso_ (R$)", "R$ 3,489.00"],
  ["_Custo_ _médio_ _por_ KM (R$)", "R$ 0.98"],
  ["_Pedágios_ _totais_ (R$)", "R$ 225.50"],
  ["_Estacionamento_ total (R$)", "R$ 62.00"],
  ["_Trajetos_ _pendentes_", "4"],
  ["% _de_ _trajetos_ _pendentes_", "40.0%"]
]);
fill(15, "A", "B", [["_Cliente_ _Alfa_", "570"], ["_Projeto_ Beta", "1360"], ["_Cliente_ Gama", "1230"], ["_Projeto_ Delta", "400"]]);
fill(15, "D", "E", ["Janeiro", "Fevereiro", "Março", "Abril", "Maio", "Junho", "Julho", "Agosto", "Setembro", "Outubro", "Novembro", "Dezembro"].map(m => [`_${m}_`, "0"]));
fill(15, "G", "H", [["_Pendente_", "R$ 1,090.50"], ["_Aprovado_", "R$ 764.50"], ["_Reembolsado_", "R$ 1,634.00"]]);

const mark = text => text.replace(/_([^_]+)_/g, '<span class="misspelt">$1</span>');

let html = "<colgroup>" + columnClasses.map(c => `<col class="c-${c}">`).join("") + "</colgroup>";
html += "<thead><tr><th></th>" + [...letters].map((l, i) => `<th scope="col"${i < 6 ? ' class="sel"' : ""}>${l}</th>`).join("") + "</tr></thead><tbody>";
for (let row = 1; row <= 37; row++) {
  html += `<tr${row === 1 ? ' class="first"' : ""}><th scope="row"${row === 1 ? ' class="sel"' : ""}>${row}</th>`;
  for (let col = 0; col < letters.length; col++) {
    const [text, cls, span = 1] = cells[letters[col] + row] || ["", ""];
    html += `<td${cls ? ` class="${cls.trim()}"` : ""}${span > 1 ? ` colspan="${span}"` : ""}>${mark(text)}</td>`;
    col += span - 1;
  }
  html += "</tr>";
}
document.getElementById("grid").innerHTML = html + "</tbody>";
```
